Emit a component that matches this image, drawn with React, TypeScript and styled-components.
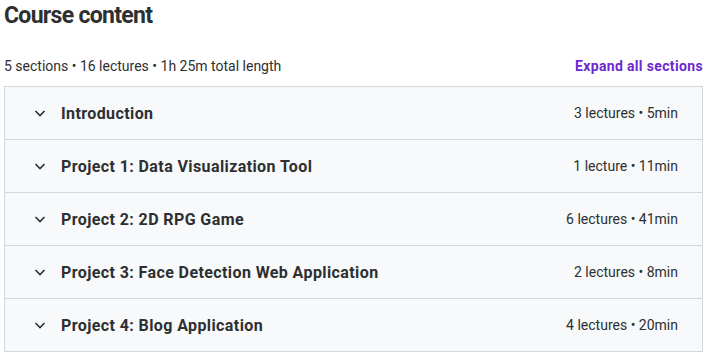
import styled, { createGlobalStyle } from 'styled-components';

const GlobalStyle = createGlobalStyle`
  body {
    margin: 0;
    background: #fff;
    font-family: Roboto, 'Noto Sans', sans-serif;
    color: #2d2f31;
  }
`;

const Page = styled.div`
  width: 699px;
  padding: 0 5px 0 4px;
`;

const Title = styled.h2`
  margin: 0;
  font-size: 23px;
  line-height: 32px;
  font-weight: 700;
  letter-spacing: -0.7px;
  color: #2d2f31;
`;

const MetaRow = styled.div`
  display: flex;
  align-items: center;
  justify-content: space-between;
  margin-top: 22px;
  height: 24px;
  margin-bottom: 8px;
`;

const MetaText = styled.span`
  font-size: 14px;
  color: #2d2f31;
`;

const ExpandButton = styled.button`
  border: none;
  background: none;
  padding: 0;
  font-family: inherit;
  font-size: 14px;
  font-weight: 700;
  letter-spacing: 0.35px;
  color: #6d28d2;
  cursor: pointer;
`;

const Panel = styled.div`
  border: 1px solid #d1d7dc;
  border-bottom: none;
`;

const Section = styled.div`
  display: flex;
  align-items: center;
  height: 52px;
  padding: 0 24px 0 29px;
  background: #f7f9fa;
  border-bottom: 1px solid #d1d7dc;
`;

const Chevron = styled.svg`
  width: 12px;
  height: 12px;
  flex-shrink: 0;
  margin-right: 15px;
`;

const SectionTitle = styled.span`
  flex: 1;
  font-size: 16px;
  font-weight: 700;
  letter-spacing: 0.4px;
  color: #2d2f31;
`;

const SectionMeta = styled.span`
  font-size: 14px;
  color: #2d2f31;
`;

const sections = [
  { title: 'Introduction', meta: '3 lectures • 5min' },
  { title: 'Project 1: Data Visualization Tool', meta: '1 lecture • 11min' },
  { title: 'Project 2: 2D RPG Game', meta: '6 lectures • 41min' },
  { title: 'Project 3: Face Detection Web Application', meta: '2 lectures • 8min' },
  { title: 'Project 4: Blog Application', meta: '4 lectures • 20min' },
];

const App = () => {
  return (
    <Page>
      <GlobalStyle />
      <Title>Course content</Title>
      <MetaRow>
        <MetaText>5 sections • 16 lectures • 1h 25m total length</MetaText>
        <ExpandButton>Expand all sections</ExpandButton>
      </MetaRow>
      <Panel>
        {sections.map((s) => (
          <Section key={s.title}>
            <Chevron viewBox="0 0 12 12">
              <path d="M1.5 4l4.5 4.5L10.5 4" fill="none" stroke="#2d2f31" strokeWidth="1.6" />
            </Chevron>
            <SectionTitle>{s.title}</SectionTitle>
            <SectionMeta>{s.meta}</SectionMeta>
          </Section>
        ))}
      </Panel>
    </Page>
  );
};

export default App;
